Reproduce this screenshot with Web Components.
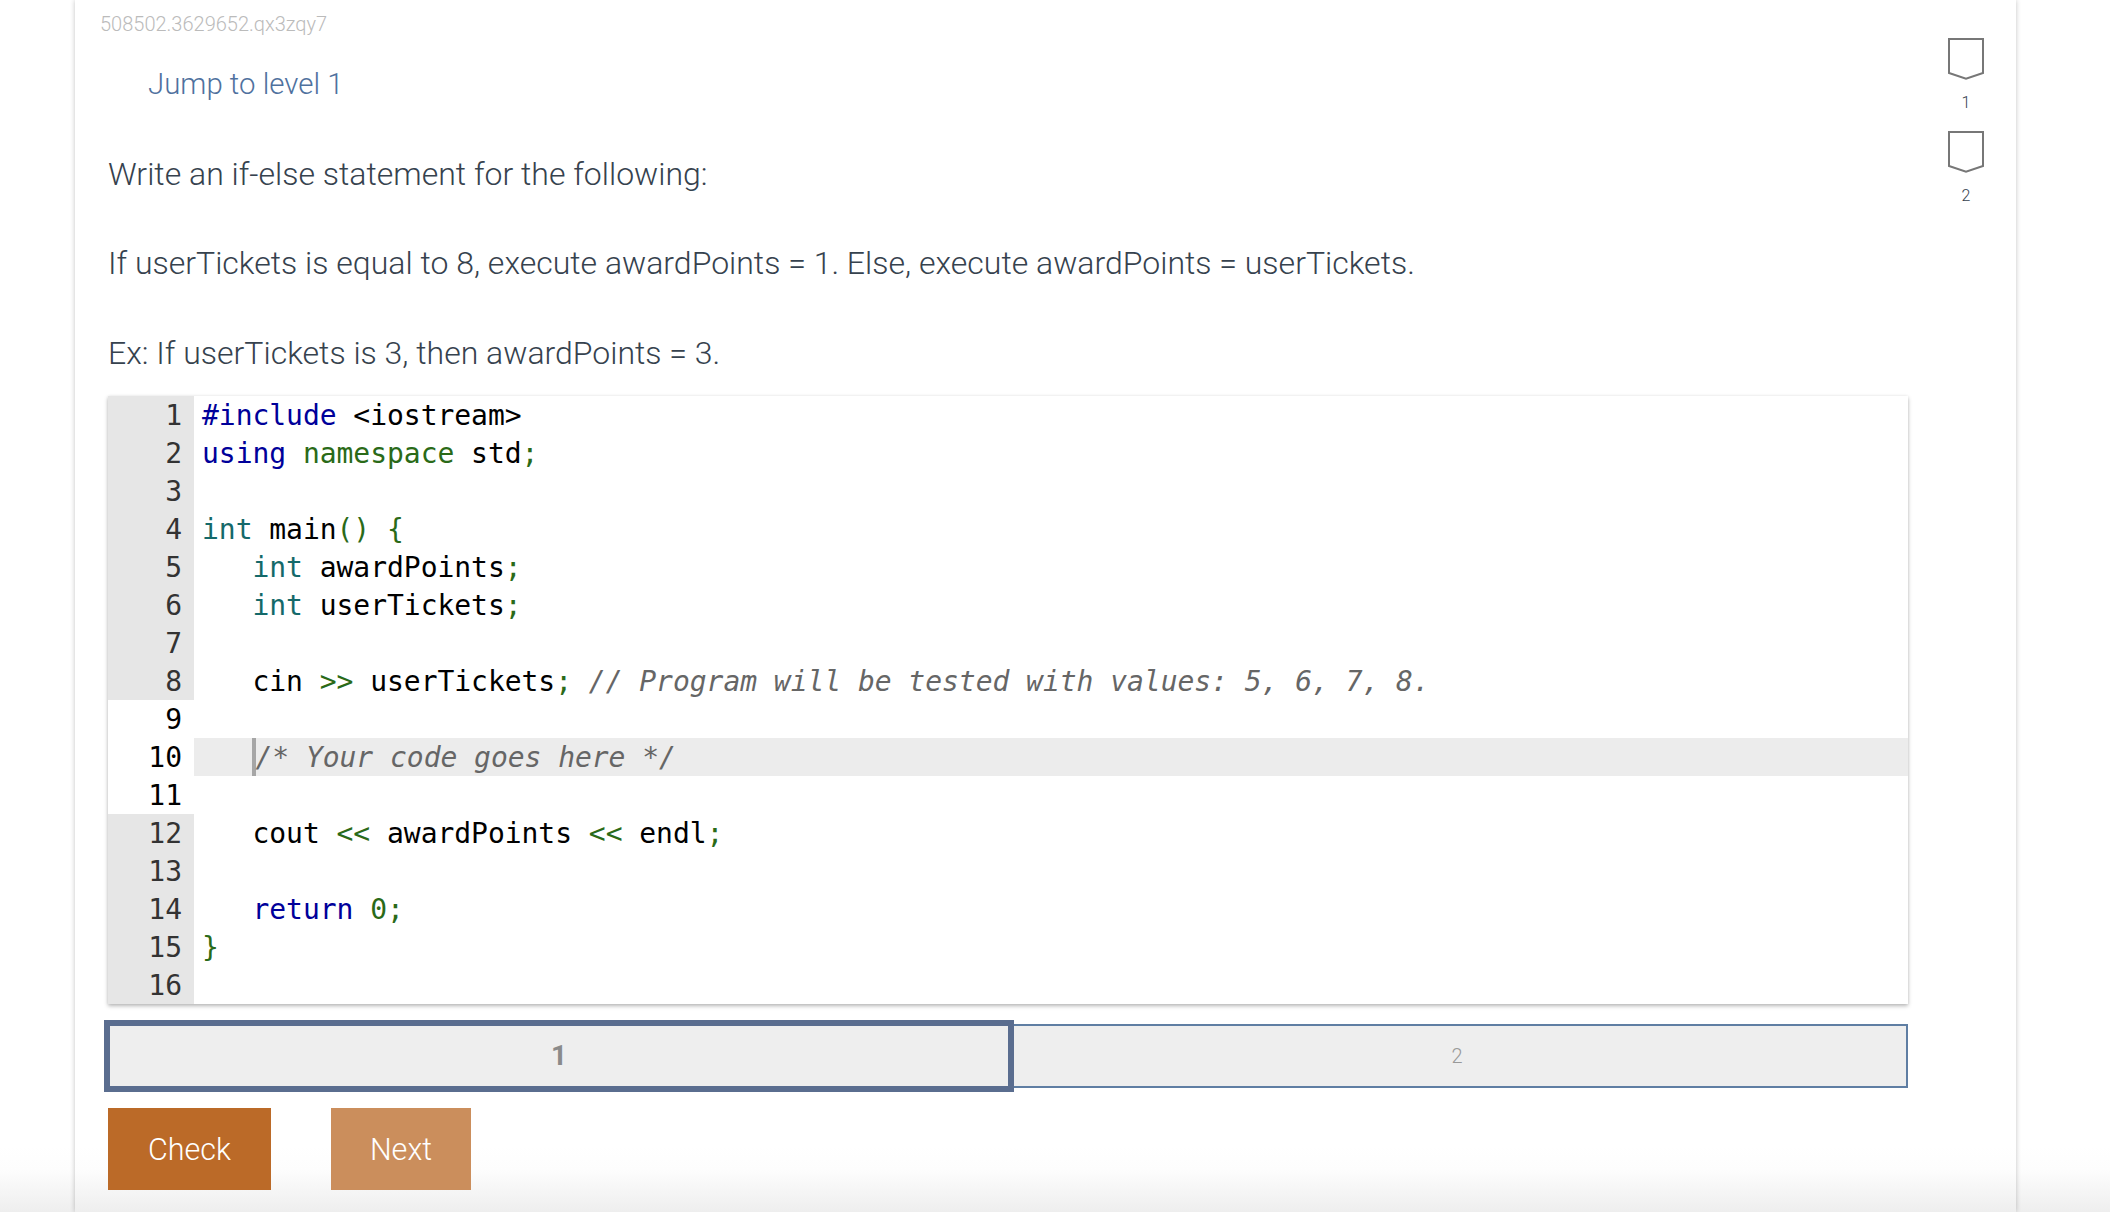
<!DOCTYPE html>
<html>
<head>
<meta charset="utf-8">
<title>Jump to level 1</title>
<style>
  html, body {
    margin: 0;
    height: 1212px;
    overflow: hidden;
    font-family: Roboto, "Liberation Sans", sans-serif;
    background: linear-gradient(to bottom, #fff 1146px, #fdfdfd 1170px, #eee 1212px);
  }
</style>
</head>
<body>

<template class="level-badge-template">
  <style>
    :host {
      display: flex;
      flex-direction: column;
      align-items: center;
      width: 36px;
      height: 93px;
    }
    svg { display: block; margin-bottom: 13px; }
    span {
      font-size: 16px;
      font-weight: 300;
      line-height: 20px;
      color: #36424e;
    }
  </style>
  <svg width="36" height="42" viewBox="0 0 36 42">
    <path d="M1 1 H35 V35 L18 40.8 L1 35 Z" fill="none" stroke="#777" stroke-width="2"/>
  </svg>
  <span><slot></slot></span>
</template>

<template class="code-editor-template">
  <style>
    :host {
      display: block;
      width: 1800px;
      height: 608px;
      margin-top: -2px;
      background: #fff;
      box-shadow: 0 2px 4px rgba(0, 0, 0, 0.28), 0 0 3px rgba(0, 0, 0, 0.06);
      font-family: "DejaVu Sans Mono", "Liberation Mono", monospace;
      font-size: 28px;
      letter-spacing: -0.04px;
      line-height: 40px;
      color: #000;
    }
    .row { display: flex; height: 38px; white-space: pre; }
    .num {
      flex: none;
      width: 86px;
      box-sizing: border-box;
      padding-right: 12px;
      text-align: right;
      background: #e6e6e6;
      color: #333;
    }
    .num.clear { background: #fff; color: #000; }
    .text { flex: 1; padding-left: 8px; }
    .row.active .text { background: #ececec; }
    .cursor {
      display: inline-block;
      width: 4px;
      height: 38px;
      margin-right: -1px;
      vertical-align: top;
      background: #a6a6a6;
    }
    .kw { color: #00009a; }
    .ns { color: #2a6a18; }
    .ty { color: #14696a; }
    .pn { color: #2a6a18; }
    .cm { color: #666; font-style: italic; }
  </style>
  <div class="lines"></div>
</template>

<template class="level-bar-template">
  <style>
    :host {
      display: flex;
      align-items: center;
      width: 1804px;
      height: 72px;
      margin-left: -4px;
    }
    .level {
      box-sizing: border-box;
      display: flex;
      align-items: center;
      justify-content: center;
      background: #eee;
    }
    .one {
      width: 910px;
      height: 72px;
      border: 6px solid #5a6d8f;
      color: #8a8a8a;
      font-size: 28px;
      font-weight: 700;
    }
    .two {
      width: 894px;
      height: 64px;
      padding-right: 6px;
      border: 2px solid #5f7ea3;
      border-left: 0;
      color: #999;
      font-size: 20px;
      font-weight: 300;
    }
  </style>
  <div class="level one">1</div>
  <div class="level two">2</div>
</template>

<template class="action-button-template">
  <style>
    :host {
      display: flex;
      align-items: center;
      justify-content: center;
      box-sizing: border-box;
      height: 82px;
      padding-top: 2px;
      width: var(--w, 140px);
      background: var(--bg, #bb6a28);
      color: #fff;
      font-size: 30.5px;
      font-weight: 300;
    }
  </style>
  <slot></slot>
</template>

<template class="challenge-card-template">
  <style>
    :host {
      display: flex;
      width: 1941px;
      height: 1212px;
      margin-left: 75px;
      box-shadow: 0 0 5px rgba(0, 0, 0, 0.24);
      color: #36424e;
      font-weight: 300;
    }
    main { flex: none; width: 1833px; padding-left: 33px; box-sizing: border-box; }
    aside {
      flex: none;
      width: 108px;
      box-sizing: border-box;
      display: flex;
      flex-direction: column;
      align-items: center;
      padding: 38px 0 0 8px;
    }
    .serial {
      margin-left: -8px;
      height: 48px;
      font-size: 20px;
      line-height: 48px;
      color: #bbb;
    }
    .jump {
      margin-left: 40px;
      height: 82px;
      font-size: 29.4px;
      line-height: 72px;
      color: #4f719e;
    }
    p {
      margin: 0;
      height: 89.33px;
      font-size: 32px;
      line-height: 89.33px;
    }
    .buttons { display: flex; gap: 60px; margin-top: 16px; }
    level-bar { margin-top: 16px; }
  </style>
  <main>
    <div class="serial">508502.3629652.qx3zqy7</div>
    <div class="jump">Jump to level 1</div>
    <p>Write an if-else statement for the following:</p>
    <p>If userTickets is equal to 8, execute awardPoints = 1. Else, execute awardPoints = userTickets.</p>
    <p>Ex: If userTickets is 3, then awardPoints = 3.</p>
    <code-editor></code-editor>
    <level-bar></level-bar>
    <div class="buttons">
      <action-button style="--w:163px;--bg:#bb6a28">Check</action-button>
      <action-button style="--w:140px;--bg:#cb8e5c">Next</action-button>
    </div>
  </main>
  <aside>
    <level-badge>1</level-badge>
    <level-badge>2</level-badge>
  </aside>
</template>

<challenge-card></challenge-card>

<script>
/**
 * Clone a template into a new open shadow root.
 * @param {HTMLElement} host The custom element.
 * @param {string} name Class name of the template.
 */
function stamp(host, name) {
  const root = host.attachShadow({ mode: 'open' })
  root.appendChild(document.querySelector('.' + name).content.cloneNode(true))
  return root
}

class LevelBadge extends HTMLElement {
  constructor() {
    super()
    stamp(this, 'level-badge-template')
  }
}

class LevelBar extends HTMLElement {
  constructor() {
    super()
    stamp(this, 'level-bar-template')
  }
}

class ActionButton extends HTMLElement {
  constructor() {
    super()
    stamp(this, 'action-button-template')
  }
}

class ChallengeCard extends HTMLElement {
  constructor() {
    super()
    stamp(this, 'challenge-card-template')
  }
}

/**
 * The read-only code area, with a gutter of line numbers.
 */
class CodeEditor extends HTMLElement {
  constructor() {
    super()
    const root = stamp(this, 'code-editor-template')
    const lines = [
      '<span class="kw">#include</span> &lt;iostream&gt;',
      '<span class="kw">using</span> <span class="ns">namespace</span> std<span class="pn">;</span>',
      '',
      '<span class="ty">int</span> main<span class="pn">()</span> <span class="pn">{</span>',
      '   <span class="ty">int</span> awardPoints<span class="pn">;</span>',
      '   <span class="ty">int</span> userTickets<span class="pn">;</span>',
      '',
      '   cin <span class="pn">&gt;&gt;</span> userTickets<span class="pn">;</span> <span class="cm">// Program will be tested with values: 5, 6, 7, 8.</span>',
      '',
      '   <span class="cursor"></span><span class="cm">/* Your code goes here */</span>',
      '',
      '   cout <span class="pn">&lt;&lt;</span> awardPoints <span class="pn">&lt;&lt;</span> endl<span class="pn">;</span>',
      '',
      '   <span class="kw">return</span> <span class="pn">0;</span>',
      '<span class="pn">}</span>',
      ''
    ]
    root.querySelector('.lines').innerHTML = lines.map((line, i) => {
      const n = i + 1
      const clear = n >= 9 && n <= 11 ? ' clear' : ''
      const active = n === 10 ? ' active' : ''
      return `<div class="row${active}"><div class="num${clear}">${n}</div><div class="text">${line}</div></div>`
    }).join('')
  }
}

customElements.define('level-badge', LevelBadge)
customElements.define('level-bar', LevelBar)
customElements.define('action-button', ActionButton)
customElements.define('code-editor', CodeEditor)
customElements.define('challenge-card', ChallengeCard)
</script>
</body>
</html>
